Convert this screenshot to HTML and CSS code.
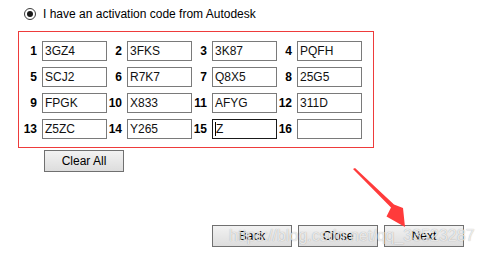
FILE: index.html
```html
<!DOCTYPE html>
<html>
<head>
<meta charset="utf-8">
<link rel="stylesheet" href="styles.css">
</head>
<body>
<div class="page">
  <div class="radio-row">
    <span class="radio"><span class="dot"></span></span>
    <span class="radio-label">I have an activation code from Autodesk</span>
  </div>
  <div class="code-box">
    <div class="grid">
      <div class="cell"><span class="num">1</span><span class="field">3GZ4</span></div>
      <div class="cell"><span class="num">2</span><span class="field">3FKS</span></div>
      <div class="cell"><span class="num">3</span><span class="field">3K87</span></div>
      <div class="cell"><span class="num">4</span><span class="field">PQFH</span></div>
      <div class="cell"><span class="num">5</span><span class="field">SCJ2</span></div>
      <div class="cell"><span class="num">6</span><span class="field">R7K7</span></div>
      <div class="cell"><span class="num">7</span><span class="field">Q8X5</span></div>
      <div class="cell"><span class="num">8</span><span class="field">25G5</span></div>
      <div class="cell"><span class="num">9</span><span class="field">FPGK</span></div>
      <div class="cell"><span class="num">10</span><span class="field">X833</span></div>
      <div class="cell"><span class="num">11</span><span class="field">AFYG</span></div>
      <div class="cell"><span class="num">12</span><span class="field">311D</span></div>
      <div class="cell"><span class="num">13</span><span class="field">Z5ZC</span></div>
      <div class="cell"><span class="num">14</span><span class="field">Y265</span></div>
      <div class="cell"><span class="num">15</span><span class="field focused"><span class="caret"></span>Z</span></div>
      <div class="cell"><span class="num">16</span><span class="field"></span></div>
    </div>
  </div>
  <div class="clear-row"><span class="btn">Clear All</span></div>
  <div class="nav-row">
    <span class="btn">Back</span>
    <span class="btn">Close</span>
    <span class="btn">Next</span>
  </div>
  <svg class="arrow" width="484" height="259" viewBox="0 0 484 259">
    <polygon points="353,169 391,207.5 386.5,216.5 405,227 403,208 394,204.5 355,168" fill="#ff3b3b"/>
  </svg>
  <div class="watermark">https://blog.csdn.net/qq_33523287</div>
</div>
</body>
</html>
```
FILE: styles.css
```css
html, body {
  margin: 0;
  padding: 0;
  background: #ffffff;
}
body {
  font-family: "Liberation Sans", Arial, sans-serif;
  font-size: 12px;
  color: #000;
}
.page {
  position: relative;
  width: 484px;
  height: 259px;
  overflow: hidden;
}
.radio-row {
  display: flex;
  align-items: center;
  height: 28px;
  padding-left: 24px;
}
.radio {
  box-sizing: border-box;
  width: 12px;
  height: 12px;
  border: 1px solid #3c3c3c;
  border-radius: 50%;
  background: #fff;
  display: flex;
  align-items: center;
  justify-content: center;
}
.dot {
  width: 6px;
  height: 6px;
  border-radius: 50%;
  background: #1a1a1a;
}
.radio-label {
  margin-left: 7px;
  font-size: 12px;
}
.code-box {
  box-sizing: border-box;
  margin-left: 18px;
  margin-top: 3px;
  width: 356px;
  height: 117px;
  border: 1px solid #ee3b3b;
  padding: 9px 0 0 3px;
}
.grid {
  display: grid;
  grid-template-columns: repeat(4, 85px);
  row-gap: 6px;
}
.cell {
  display: flex;
  align-items: center;
  height: 20px;
}
.num {
  width: 15px;
  margin-right: 5px;
  text-align: right;
  font-weight: bold;
  font-size: 12px;
}
.field {
  box-sizing: border-box;
  width: 65px;
  height: 20px;
  border: 1px solid #7a7a7a;
  padding-left: 2px;
  display: flex;
  align-items: center;
  font-size: 12px;
  color: #111;
  background: #fff;
}
.field.focused {
  border-color: #1a1a1a;
}
.caret {
  width: 1px;
  height: 14px;
  background: #000;
}
.clear-row {
  padding-left: 44px;
  margin-top: 2px;
}
.btn {
  box-sizing: border-box;
  display: inline-flex;
  align-items: center;
  justify-content: center;
  width: 80px;
  height: 22px;
  border: 1px solid #707070;
  background: linear-gradient(#f2f2f2, #dddddd);
  font-size: 12px;
  color: #000;
}
.nav-row {
  display: flex;
  gap: 6px;
  padding-left: 212px;
  margin-top: 53px;
}
.arrow {
  position: absolute;
  left: 0;
  top: 0;
}
.watermark {
  position: absolute;
  left: 229px;
  top: 227px;
  font-family: "Liberation Sans", Arial, sans-serif;
  font-size: 16px;
  color: rgba(255, 255, 255, 0.75);
  text-shadow: 0 0 1px rgba(0, 0, 0, 0.35);
  white-space: nowrap;
}
```
